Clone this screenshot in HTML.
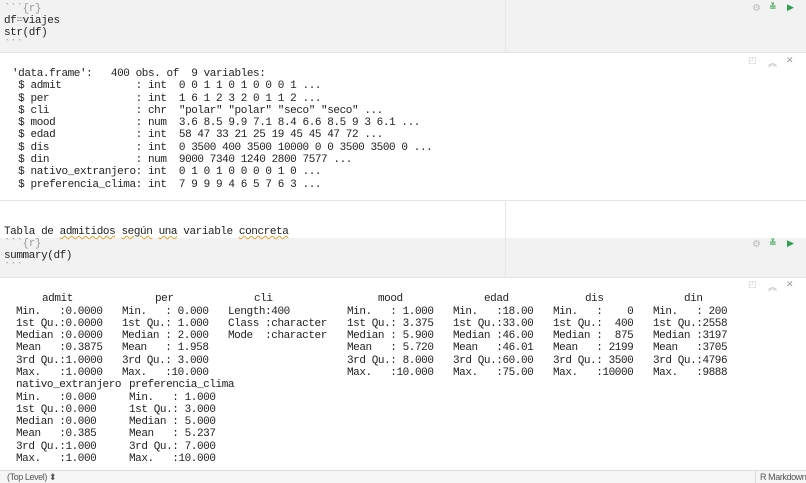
<!DOCTYPE html>
<html><head><meta charset="utf-8"><style>
body{margin:0;width:806px;height:482px;overflow:hidden;background:#fff;position:relative;font-family:"Liberation Mono",monospace;font-size:11px;letter-spacing:-0.42px;color:#222;}
pre{margin:0;font:inherit;line-height:12.3px;position:absolute;white-space:pre;}
.g{position:absolute;left:0;width:806px;background:#f2f2f2;}
.o{position:absolute;left:0;width:806px;background:#fff;border-top:1px solid #e3e3e3;border-bottom:1px solid #e3e3e3;}
.vl{position:absolute;left:505px;width:1px;background:#e6e6e6;}
.ic{position:absolute;font-family:"DejaVu Sans",sans-serif;font-size:9px;letter-spacing:0;}
.sq{text-decoration:underline wavy #e0a030;text-decoration-thickness:1px;}
.bt{color:#999}
</style></head><body>
<div class="g" style="top:0;height:52px"></div>
<div class="o" style="top:52px;height:147px"></div>
<div class="g" style="top:238px;height:39px"></div>
<div class="o" style="top:277px;height:192px"></div>
<div class="vl" style="top:0;height:52px"></div>
<div class="vl" style="top:200px;height:77px"></div>
<pre style="left:4px;top:3px;line-height:12px"><span class="bt">&#96;&#96;&#96;{r}</span>
df<span style="color:#888">=</span>viajes
str(df)
<span class="bt">&#96;&#96;&#96;</span></pre>
<pre style="left:12px;top:68px">'data.frame':   400 obs. of  9 variables:
 $ admit            : int  0 0 1 1 0 1 0 0 0 1 ...
 $ per              : int  1 6 1 2 3 2 0 1 1 2 ...
 $ cli              : chr  "polar" "polar" "seco" "seco" ...
 $ mood             : num  3.6 8.5 9.9 7.1 8.4 6.6 8.5 9 3 6.1 ...
 $ edad             : int  58 47 33 21 25 19 45 45 47 72 ...
 $ dis              : int  0 3500 400 3500 10000 0 0 3500 3500 0 ...
 $ din              : num  9000 7340 1240 2800 7577 ...
 $ nativo_extranjero: int  0 1 0 1 0 0 0 0 1 0 ...
 $ preferencia_clima: int  7 9 9 9 4 6 5 7 6 3 ...</pre>
<pre style="left:4px;top:226px">Tabla de <span class="sq">admitidos</span> <span class="sq">según</span> <span class="sq">una</span> variable <span class="sq">concreta</span></pre>
<pre style="left:4px;top:238px;line-height:12px"><span class="bt">&#96;&#96;&#96;{r}</span>
summary(df)
<span class="bt">&#96;&#96;&#96;</span></pre>
<pre style="left:42px;top:292.5px">admit</pre><pre style="left:155px;top:292.5px">per</pre><pre style="left:254px;top:292.5px">cli</pre><pre style="left:378px;top:292.5px">mood</pre><pre style="left:484px;top:292.5px">edad</pre><pre style="left:585px;top:292.5px">dis</pre><pre style="left:684px;top:292.5px">din</pre>
<pre style="left:16px;top:305.5px">Min.   :0.0000
1st Qu.:0.0000
Median :0.0000
Mean   :0.3875
3rd Qu.:1.0000
Max.   :1.0000
nativo_extranjero
Min.   :0.000
1st Qu.:0.000
Median :0.000
Mean   :0.385
3rd Qu.:1.000
Max.   :1.000</pre>
<pre style="left:122px;top:305.5px">Min.   : 0.000
1st Qu.: 1.000
Median : 2.000
Mean   : 1.958
3rd Qu.: 3.000
Max.   :10.000</pre>
<pre style="left:129px;top:379.3px">preferencia_clima
Min.   : 1.000
1st Qu.: 3.000
Median : 5.000
Mean   : 5.237
3rd Qu.: 7.000
Max.   :10.000</pre>
<pre style="left:228px;top:305.5px">Length:400
Class :character
Mode  :character</pre>
<pre style="left:347px;top:305.5px">Min.   : 1.000
1st Qu.: 3.375
Median : 5.900
Mean   : 5.720
3rd Qu.: 8.000
Max.   :10.000</pre>
<pre style="left:453px;top:305.5px">Min.   :18.00
1st Qu.:33.00
Median :46.00
Mean   :46.01
3rd Qu.:60.00
Max.   :75.00</pre>
<pre style="left:553px;top:305.5px">Min.   :    0
1st Qu.:  400
Median :  875
Mean   : 2199
3rd Qu.: 3500
Max.   :10000</pre>
<pre style="left:653px;top:305.5px">Min.   : 200
1st Qu.:2558
Median :3197
Mean   :3705
3rd Qu.:4796
Max.   :9888</pre>
<div class="ic" style="left:752px;top:3px;color:#bbb;font-size:10px">⚙</div>
<div class="ic" style="left:769px;top:3px;color:#3aa357;font-weight:bold">≚</div>
<div class="ic" style="left:787px;top:3px;color:#2e9e4f">▶</div>
<div class="ic" style="left:752px;top:239px;color:#bbb;font-size:10px">⚙</div>
<div class="ic" style="left:769px;top:239px;color:#3aa357;font-weight:bold">≚</div>
<div class="ic" style="left:787px;top:239px;color:#2e9e4f">▶</div>
<div class="ic" style="left:748px;top:56px;color:#ccc">◰</div>
<div class="ic" style="left:768px;top:56px;color:#aaa">︽</div>
<div class="ic" style="left:786px;top:56px;color:#999">✕</div>
<div class="ic" style="left:748px;top:280px;color:#ccc">◰</div>
<div class="ic" style="left:768px;top:280px;color:#aaa">︽</div>
<div class="ic" style="left:786px;top:280px;color:#999">✕</div>
<div style="position:absolute;left:0;top:470px;width:806px;height:12px;background:#f6f6f6;border-top:1px solid #ddd;font-family:'Liberation Sans',sans-serif;font-size:9px;color:#555;line-height:12px;white-space:nowrap">
<span style="position:absolute;left:7px">(Top Level) ⬍</span>
<span style="position:absolute;left:755px;border-left:1px solid #ddd;padding-left:4px">R Markdown</span></div>
</body></html>
